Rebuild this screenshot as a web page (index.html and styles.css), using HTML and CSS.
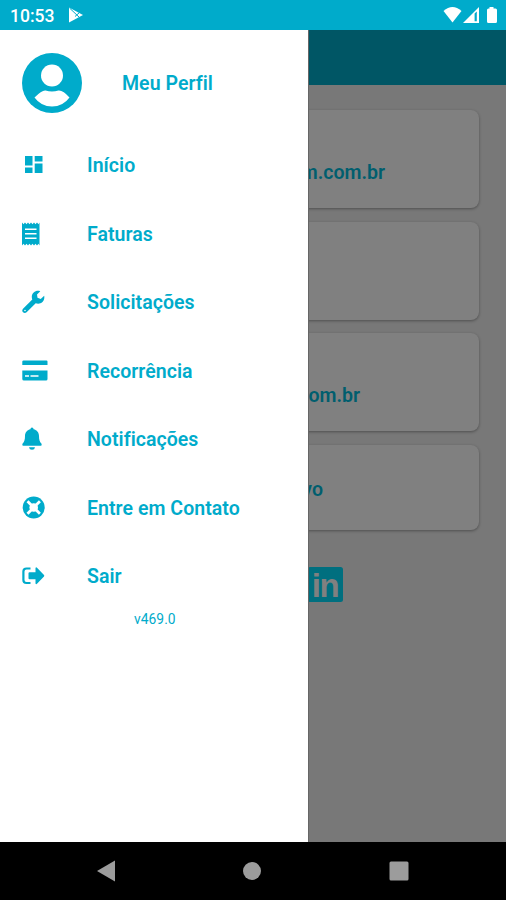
FILE: index.html
```html
<!DOCTYPE html>
<html lang="pt-BR">
<head>
    <meta charset="UTF-8">
    <meta name="viewport" content="width=device-width, initial-scale=1.0">
    <title>Menu</title>
    <link rel="stylesheet" href="styles.css">
</head>
<body>
    <div class="statusbar">
        <span class="clock">10:53</span>
        <svg class="play" width="16" height="16" viewBox="0 0 16 16">
            <path d="M1 0.5L15 8L1 15.5Z" fill="#fff"/>
            <path d="M1.5 1L11.5 10.5M7 9.5L11.5 5.5" stroke="#00abcb" stroke-width="1" fill="none"/>
        </svg>
        <svg class="signals" width="56" height="18" viewBox="0 0 56 18">
            <path d="M0.5 5Q9.5 -3 18.5 5L9.5 16.5Z" fill="#fff"/>
            <path d="M20 17L36 1V17Z" fill="#fff"/>
            <path d="M31.6 7.5V15.2H33.8V5.5Z" fill="#00abcb"/>
            <path d="M46.5 1h4v1.5h2q1.5 0 1.5 1.5v11.5q0 1.5 -1.5 1.5h-7q-1.5 0 -1.5 -1.5v-11.5q0 -1.5 1.5 -1.5h1z" fill="#fff"/>
        </svg>
    </div>

    <div class="screen">
        <nav class="drawer">
            <a class="profile">
                <svg width="60" height="60" viewBox="0 0 60 60">
                    <circle cx="30" cy="30" r="30" fill="#00abcb"/>
                    <circle cx="30" cy="22.5" r="11" fill="#fff"/>
                    <path d="M12.5 44.5Q20 37 23.5 37.5Q30 39.5 36.5 37.5Q41 37 47.5 44.5Q41 53.5 30 53.5Q19 53.5 12.5 44.5Z" fill="#fff"/>
                </svg>
                <span>Meu Perfil</span>
            </a>
            <a class="item">
                <svg viewBox="0 0 28 28">
                    <path d="M3 5h7.5v9.5H3zM12.7 5H20.5v5.5h-7.8zM3 16.5h7.5v5.5H3zM12.7 12.5H20.5V22h-7.8z"/>
                </svg>
                <span>Início</span>
            </a>
            <a class="item">
                <svg viewBox="0 0 28 28">
                    <path d="M0 2.5l1.5 1.8L3 2.5 4.5 4.3 6 2.5 7.5 4.3 9 2.5 10.5 4.3 12 2.5 13.5 4.3 15 2.5 16.5 4.3 17.5 2.5V25.5L16.5 23.7 15 25.5 13.5 23.7 12 25.5 10.5 23.7 9 25.5 7.5 23.7 6 25.5 4.5 23.7 3 25.5 1.5 23.7 0 25.5z"/>
                    <path class="line" d="M3 9.2h11.5M3 13.7h11.5M3 18.2h11.5"/>
                </svg>
                <span>Faturas</span>
            </a>
            <a class="item">
                <svg viewBox="0 0 28 28">
                    <path fill-rule="evenodd" d="M22.2 7.7L18.7 11 15.5 9.8 15 6.5 18.3 3.2C14 1.8 10 4.6 9.8 8.5Q9.7 10.3 10.3 11.5L1 20.7Q-0.5 22.6 1 24.3Q2.8 25.9 4.6 24.3L13.7 15.2C18.4 17 23.2 13.3 22.2 7.7ZM3 21.7a0.8 0.8 0 1 1 0 1.6a0.8 0.8 0 1 1 0-1.6z"/>
                </svg>
                <span>Solicitações</span>
            </a>
            <a class="item">
                <svg viewBox="0 0 28 28">
                    <path d="M1.5 3.5H24.5Q25.5 3.5 25.5 4.5V8H0.3V4.5Q0.5 3.5 1.5 3.5zM0.3 13.5H25.5V22Q25.5 23.5 24 23.5H2Q0.3 23.5 0.3 22z"/>
                    <path class="line" d="M3 19h4M8.5 19h8"/>
                </svg>
                <span>Recorrência</span>
            </a>
            <a class="item">
                <svg viewBox="0 0 28 28">
                    <path d="M10 2.5Q11.5 2.5 11.6 4.3C15 5 17 7.8 17 11C17 15 17.7 16.8 19.4 18.5Q20.2 20.7 18.8 20.8H1.2Q-0.2 20.7 0.6 18.5C2.3 16.8 3 15 3 11C3 7.8 5 5 8.4 4.3Q8.5 2.5 10 2.5ZM7 22.3H13Q12.7 24.8 10 24.8Q7.3 24.8 7 22.3Z"/>
                </svg>
                <span>Notificações</span>
            </a>
            <a class="item">
                <svg viewBox="0 0 28 28">
                    <circle cx="11.7" cy="13.5" r="11"/>
                    <path class="spokes" d="M5.5 7.3L17.9 19.7M17.9 7.3L5.5 19.7"/>
                    <circle class="hole" cx="11.7" cy="13.5" r="4.3"/>
                </svg>
                <span>Entre em Contato</span>
            </a>
            <a class="item">
                <svg viewBox="0 0 28 28">
                    <path class="door" d="M8.5 6.5H4.5Q1.4 6.5 1.4 9.5V18Q1.4 21 4.5 21H8.5"/>
                    <path d="M7.5 10.3H13.5V6Q14 4.8 15 5.7L22 13Q22.6 13.7 22 14.5L15 21.8Q14 22.7 13.5 21.5V17.3H7.5Q6.5 17.3 6.5 16.3V11.3Q6.5 10.3 7.5 10.3Z"/>
                </svg>
                <span>Sair</span>
            </a>
            <span class="version">v469.0</span>
        </nav>

        <main class="page">
            <div class="toolbar"></div>
            <div class="cards">
                <div class="card first">m.com.br</div>
                <div class="card"></div>
                <div class="card third">om.br</div>
                <div class="card last">vo</div>
            </div>
            <svg class="linkedin" width="35" height="35" viewBox="0 0 35 35">
                <rect width="35" height="35" rx="2.5" fill="#006f7f"/>
                <text x="3.7" y="29.5" textLength="28">in</text>
            </svg>
        </main>
    </div>

    <div class="navbar">
        <svg width="18" height="22" viewBox="0 0 18 22"><path d="M0 11L18 0.5V21.5Z"/></svg>
        <svg width="18" height="18" viewBox="0 0 18 18"><circle cx="9" cy="9" r="9"/></svg>
        <svg width="20" height="20" viewBox="0 0 20 20"><rect x="0.5" y="0.5" width="19" height="19" rx="1.5"/></svg>
    </div>
</body>
</html>
```
FILE: styles.css
```css
* {
    box-sizing: border-box;
}

body {
    margin: 0;
    height: 900px;
    display: flex;
    flex-direction: column;
    font-family: Roboto, "Liberation Sans", sans-serif;
    color: #00abcb;
    overflow: hidden;
}

.statusbar {
    height: 30px;
    padding: 0 7px 0 10px;
    display: flex;
    align-items: center;
    background-color: #00abcb;
    color: #fff;
}

.clock {
    font-size: 17.5px;
    font-weight: 500;
    width: 58px;
    padding-top: 2px;
}

.signals {
    margin-left: auto;
}

.screen {
    height: 812px;
    display: flex;
}

.drawer {
    width: 308px;
    flex: none;
    background-color: #fff;
    display: flex;
    flex-direction: column;
    font-size: 19.5px;
    font-weight: 600;
    letter-spacing: 0.05px;
}

.profile {
    height: 101px;
    padding: 5px 0 0 22px;
    display: flex;
    align-items: center;
    gap: 40px;
}

.item {
    height: 68.5px;
    padding-left: 22px;
    display: flex;
    align-items: center;
    gap: 37px;
}

.item span,
.profile span {
    padding-top: 1px;
}

.item svg {
    width: 28px;
    height: 28px;
    fill: #00abcb;
}

.item .line {
    stroke: #fff;
    stroke-width: 1.6;
}

.item .spokes {
    stroke: #fff;
    stroke-width: 2.8;
}

.item .hole {
    fill: #fff;
}

.item .door {
    fill: none;
    stroke: #00abcb;
    stroke-width: 2.2;
}

.version {
    font-size: 13.8px;
    font-weight: 400;
    padding-left: 134px;
}

.page {
    flex: 1;
    background-color: #787878;
    border-left: 1px solid #666;
    overflow: hidden;
}

.toolbar {
    height: 55px;
    background-color: #005665;
}

.cards {
    padding: 25px 27px 0 0;
    display: flex;
    flex-direction: column;
    gap: 13.5px;
}

.card {
    height: 98px;
    margin-left: -20px;
    border-radius: 8px;
    background-color: #808080;
    box-shadow: 0 1px 3px rgba(0, 0, 0, 0.35);
    color: #005e6e;
    font-size: 19.5px;
    font-weight: 600;
    line-height: 24px;
    text-align: right;
    padding-top: 51px;
}

.first {
    padding-right: 94px;
}

.third {
    padding-right: 119px;
}

.last {
    height: 85px;
    padding-top: 33px;
    padding-right: 156px;
}

.linkedin {
    display: block;
    margin-top: 37px;
    margin-left: -1px;
}

.linkedin text {
    font-family: "Liberation Sans", sans-serif;
    font-size: 33px;
    font-weight: 700;
    fill: #808080;
}

.navbar {
    height: 58px;
    padding: 0 97px;
    display: flex;
    align-items: center;
    justify-content: space-between;
    background-color: #000;
}

.navbar svg {
    fill: #9c9c9c;
}
```
